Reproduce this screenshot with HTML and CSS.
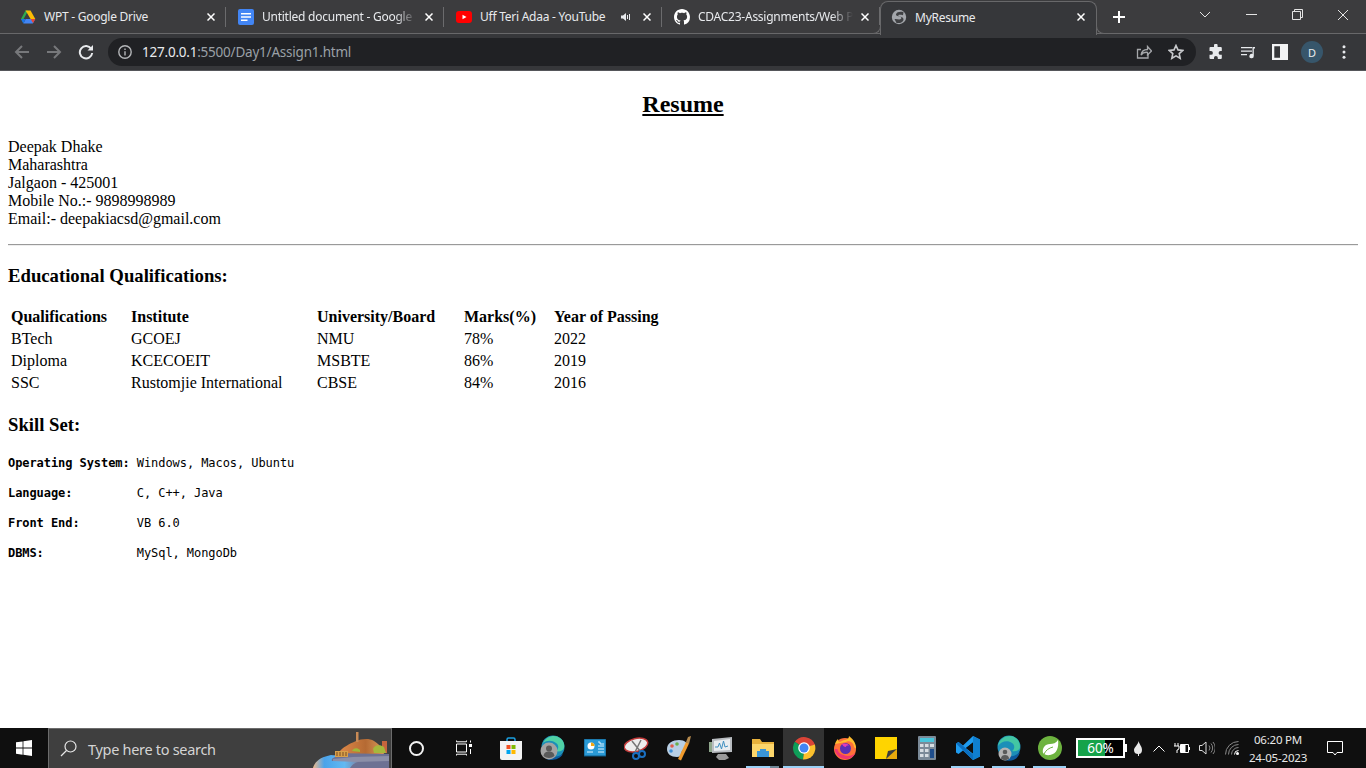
FILE: index.html
```html
<!DOCTYPE html>
<html lang="en">
<head>
  <meta charset="UTF-8">
  <title>MyResume</title>
  <link rel="stylesheet" href="styles.css">
</head>
<body>

  <div class="tabstrip">
    <div class="tab first">
      <svg class="favicon" viewBox="0 0 16 16"><polygon points="5.500,1.500 8.300,1.500 3.600,10 3.500,14.300 1,10" fill="#2da94f"/><polygon points="5.500,1.500 10.500,1.500 15.300,10 10.600,10" fill="#fbbc04"/><polygon points="3.300,14.500 5.700,10 15.300,10 12.800,14.500" fill="#4285f4"/><polygon points="10.600,10 15.300,10 12.800,14.500 13,14" fill="#ea4335"/><polygon points="1,10 5.700,10 3.300,14.500" fill="#1a73e8"/></svg>
      <span class="tab-title">WPT - Google Drive</span>
      <svg class="tab-close" viewBox="0 0 8 8"><path d="M.5.5l7 7M7.500.5l-7 7"/></svg>
    </div>
    <div class="tab">
      <svg class="favicon" viewBox="0 0 16 16"><rect width="16" height="16" rx="2" fill="#4285f4"/><path d="M3 4h10v1.600H3zM3 7.200h10v1.600H3zM3 10.400h6.500V12H3z" fill="#fff"/></svg>
      <span class="tab-title fade">Untitled document - Google</span>
      <svg class="tab-close" viewBox="0 0 8 8"><path d="M.5.5l7 7M7.500.5l-7 7"/></svg>
    </div>
    <div class="tab">
      <svg class="favicon" viewBox="0 0 16 16"><rect y="2" width="16" height="12" rx="3" fill="#f00"/><polygon points="6.500,5.800 10.500,8 6.500,10.200" fill="#fff"/></svg>
      <span class="tab-title">Uff Teri Adaa - YouTube</span>
      <svg class="tab-audio" viewBox="0 0 10 10"><path d="M0 3.500h2L5 1v8L2 6.500H0z" fill="#e8eaed"/><path d="M6.500 3v4M8.500 2v6" stroke="#e8eaed" fill="none"/></svg>
      <svg class="tab-close" viewBox="0 0 8 8"><path d="M.5.5l7 7M7.500.5l-7 7"/></svg>
    </div>
    <div class="tab">
      <svg class="favicon" viewBox="0 0 16 16"><path fill="#fff" d="M8 0C3.58 0 0 3.58 0 8c0 3.54 2.29 6.53 5.47 7.59.4.07.55-.17.55-.38 0-.19-.01-.82-.01-1.49-2.01.37-2.53-.49-2.69-.94-.09-.23-.48-.94-.82-1.13-.28-.15-.68-.52-.01-.53.63-.01 1.08.58 1.23.82.72 1.21 1.87.87 2.33.66.07-.52.28-.87.51-1.07-1.78-.2-3.64-.89-3.64-3.95 0-.87.31-1.59.82-2.15-.08-.2-.36-1.02.08-2.12 0 0 .67-.21 2.2.82.64-.18 1.32-.27 2-.27.68 0 1.36.09 2 .27 1.53-1.04 2.2-.82 2.2-.82.44 1.1.16 1.92.08 2.12.51.56.82 1.27.82 2.15 0 3.07-1.87 3.75-3.65 3.95.29.25.54.73.54 1.48 0 1.07-.01 1.93-.01 2.2 0 .21.15.46.55.38A8.013 8.013 0 0016 8c0-4.42-3.58-8-8-8z"/></svg>
      <span class="tab-title fade">CDAC23-Assignments/Web P</span>
      <svg class="tab-close" viewBox="0 0 8 8"><path d="M.5.5l7 7M7.500.5l-7 7"/></svg>
    </div>
    <div class="tab active">
      <svg class="favicon" viewBox="0 0 16 16"><circle cx="8" cy="8" r="7.200" fill="#a3a6ab"/><path d="M12.500 3.200C9.500 2.300 5.500 3 5 5.300c-.4 2 3.500 1.800 5 3 1 .9-.2 2.200-1.800 2.200-1.500 0-3-.7-4.700-.4l2 3.800c3 .7 6.500-.5 7-3 .4-2-1.800-3-3.500-3.400-1-.2-2-.6-1.600-1.300.5-.7 2.400-.5 4.600 0z" fill="#3f4043"/></svg>
      <span class="tab-title">MyResume</span>
      <svg class="tab-close" viewBox="0 0 8 8"><path d="M.5.5l7 7M7.500.5l-7 7"/></svg>
    </div>
    <svg class="new-tab" viewBox="0 0 12 12"><path d="M6 0v12M0 6h12"/></svg>
    <div class="window-btns">
      <div class="window-btn"><svg width="12" height="7" viewBox="0 0 12 7"><path d="M1 1l5 5 5-5"/></svg></div>
      <div class="window-btn"><svg width="11" height="1" viewBox="0 0 11 1"><path d="M0 .5h11"/></svg></div>
      <div class="window-btn"><svg width="11" height="11" viewBox="0 0 11 11"><path d="M.5 2.500h8v8h-8zM2.500 2.500v-2h8v8h-2"/></svg></div>
      <div class="window-btn"><svg width="12" height="12" viewBox="0 0 12 12"><path d="M1 1l10 10M11 1L1 11"/></svg></div>
    </div>
  </div>

  <div class="toolbar">
    <div class="tool-btn"><svg viewBox="0 0 16 16" class="dim"><path d="M15 8H2M8 2L2 8l6 6"/></svg></div>
    <div class="tool-btn"><svg viewBox="0 0 16 16" class="dim"><path d="M1 8h13M8 2l6 6-6 6"/></svg></div>
    <div class="tool-btn"><svg viewBox="0 0 16 16" class="bright"><path d="M13.200 4.800A6.200 6.200 0 1 0 14.200 9"/><path d="M15 1v5.500H9.500z" class="solid"/></svg></div>
    <div class="omnibox">
      <svg class="info" viewBox="0 0 16 16"><circle cx="8" cy="8" r="6.200"/><path d="M8 7.200v4.300M8 4.400v1.600"/></svg>
      <span class="url"><span class="host">127.0.0.1</span>:5500/Day1/Assign1.html</span>
      <div class="tool-btn"><svg viewBox="0 0 16 16" class="dim-light"><path d="M12 9.500V14H1.500V5.500H5"/><path d="M5 11c.5-3.500 3-5.500 6.500-5.500V2.500l4 4.500-4 4V8.300C8.500 8 6.500 9 5 11z"/></svg></div>
      <div class="tool-btn"><svg viewBox="0 0 16 16" class="dim-light star"><path d="M8 1.500l2 4.400 4.800.5-3.600 3.200 1 4.700L8 11.900l-4.200 2.400 1-4.700L1.200 6.400 6 5.900z"/></svg></div>
    </div>
    <div class="tool-btn ext"><svg viewBox="0 0 16 16"><path fill="#e8eaed" d="M6 1.500a1.800 1.800 0 0 1 3.600 0V3h3.200a1 1 0 0 1 1 1v3h-1.300a1.900 1.900 0 0 0 0 3.800h1.300V14a1 1 0 0 1-1 1h-3v-1.200a1.900 1.900 0 0 0-3.800 0V15H2.500a1 1 0 0 1-1-1v-3.200H3a1.900 1.900 0 0 0 0-3.800H1.500V4a1 1 0 0 1 1-1H6z"/></svg></div>
    <div class="tool-btn"><svg viewBox="0 0 16 16"><path d="M1 3h11v1.300H1zM1 6.500h11v1.300H1zM1 10h6v1.300H1z" fill="#e8eaed"/><path d="M12.500 3H15v1.500h-1.200V12a2.200 2.200 0 1 1-1.300-2z" fill="#e8eaed"/></svg></div>
    <div class="tool-btn"><svg viewBox="0 0 14 14"><path fill-rule="evenodd" d="M0 0h14v14H0zM2 2v10h5V2z" fill="#f2f3f4"/></svg></div>
    <div class="tool-btn"><span class="avatar">D</span></div>
    <div class="tool-btn"><svg viewBox="0 0 16 16"><circle cx="8" cy="2.800" r="1.500" fill="#e8eaed"/><circle cx="8" cy="8" r="1.500" fill="#e8eaed"/><circle cx="8" cy="13.200" r="1.500" fill="#e8eaed"/></svg></div>
  </div>

  <div class="page">
    <h2 class="title">Resume</h2>
    <p class="contact">
      Deepak Dhake<br>
      Maharashtra<br>
      Jalgaon - 425001<br>
      Mobile No.:- 9898998989<br>
      Email:- deepakiacsd@gmail.com
    </p>
    <hr class="rule">
    <h3>Educational Qualifications:</h3>
    <table>
      <colgroup>
        <col class="col-qual"><col class="col-inst"><col class="col-univ"><col class="col-marks"><col class="col-year">
      </colgroup>
      <tr><th>Qualifications</th><th>Institute</th><th>University/Board</th><th>Marks(%)</th><th>Year of Passing</th></tr>
      <tr><td>BTech</td><td>GCOEJ</td><td>NMU</td><td>78%</td><td>2022</td></tr>
      <tr><td>Diploma</td><td>KCECOEIT</td><td>MSBTE</td><td>86%</td><td>2019</td></tr>
      <tr><td>SSC</td><td>Rustomjie International</td><td>CBSE</td><td>84%</td><td>2016</td></tr>
    </table>
    <h3>Skill Set:</h3>
    <pre><b>Operating System:</b> Windows, Macos, Ubuntu</pre>
    <pre><b>Language:</b>         C, C++, Java</pre>
    <pre><b>Front End:</b>        VB 6.0</pre>
    <pre><b>DBMS:</b>             MySql, MongoDb</pre>
  </div>

  <div class="taskbar">
    <div class="start">
      <svg width="16" height="16" viewBox="0 0 16 16"><path fill="#fff" d="M0 2.300l6.600-.9v6.200H0zM7.400 1.300L16 0v7.600H7.400zM0 8.400h6.600v6.300L0 13.700zM7.400 8.400H16V16l-8.600-1.200z"/></svg>
    </div>
    <div class="search">
      <svg class="search-icon" width="17" height="17" viewBox="0 0 17 17"><circle cx="10.500" cy="6.500" r="5.500"/><path d="M6.500 10.500L1 16"/></svg>
      <span class="search-text">Type here to search</span>
      <svg class="search-art" width="80" height="39" viewBox="0 0 80 39">
        <defs>
          <linearGradient id="water" x1="0" y1="0" x2="1" y2="0"><stop offset="0" stop-color="#f0b98a"/><stop offset=".25" stop-color="#4aa3ea"/><stop offset=".7" stop-color="#62b9f2"/><stop offset="1" stop-color="#7c86a8"/></linearGradient>
          <linearGradient id="dome" x1="0" y1="0" x2="1" y2="0"><stop offset="0" stop-color="#e08a4a"/><stop offset=".6" stop-color="#b56a33"/><stop offset="1" stop-color="#d99a5c"/></linearGradient>
        </defs>
        <path d="M18 39V28l14-4h30l16 1v14z" fill="#6d7193"/>
        <path d="M22 30l20-2 36-1v5l-34 1-22 1z" fill="#8c8fa8"/>
        <path d="M2 39c2-7 8-11 18-13l8 1c-6 1-8 3-7 5l26 1c-4 1-6 3-8 6z" fill="url(#water)"/>
        <path d="M27 24c5-6 11-9 18-12 5-2 13-3 18 0 5 3 8 7 10 13z" fill="url(#dome)"/>
        <rect x="45" y="3" width="2.500" height="10" fill="#c98a55"/>
        <rect x="71" y="12" width="5" height="12" fill="#c8653d"/>
        <path d="M41 22c1-3 5-4 8-1v2z" fill="#9fb83a"/>
        <path d="M62 20c1-4 7-5 11-2l2 6H63z" fill="#a6b83c"/>
        <path d="M24 22h13v6H24z" fill="#d8a04a"/>
        <path d="M26 23v4M29 23v4M32 23v4M35 23v4" stroke="#7a4a20"/>
      </svg>
    </div>
    <div class="task-btn cortana"><span class="cortana-ring"></span></div>
    <div class="task-btn taskview">
      <svg width="16" height="16" viewBox="0 0 16 16"><path d="M.5.500v1.300h10V.500M.5 15.500v-1.300h10v1.300M.5 4h10v8H.5z" fill="none" stroke="#fff"/><rect x="13" y="4" width="3" height="3" fill="#fff"/><path d="M14.500.500v2M14.500 9v5" stroke="#fff"/></svg>
    </div>

    <div class="apps wide">
      <div class="task-btn"><svg width="24" height="24" viewBox="0 0 24 24"><path d="M8 6V3.500A1.500 1.500 0 0 1 9.500 2h5A1.500 1.500 0 0 1 16 3.500V6" fill="none" stroke="#1ba1e2" stroke-width="1.500"/><path d="M1 5h22v17a2 2 0 0 1-2 2H3a2 2 0 0 1-2-2z" fill="#f3f3f3"/><rect x="7.500" y="9" width="4" height="4" fill="#f25022"/><rect x="12.500" y="9" width="4" height="4" fill="#7fba00"/><rect x="7.500" y="14" width="4" height="4" fill="#00a4ef"/><rect x="12.500" y="14" width="4" height="4" fill="#ffb900"/></svg></div>
      <div class="task-btn"><svg width="26" height="26" viewBox="0 0 26 26"><circle cx="13" cy="12" r="11.500" fill="#1c8fb8"/><path d="M3 8c3-7 12-9 17-5 3 2 5 6 4 10-1 3-5 4-8 3 3-2 3-6 0-8-4-3-9-3-13 0z" fill="#4fd1a5"/><path d="M6 24c6 2 13 1 17-5-3 2-7 3-11 3z" fill="#0d5a9e"/><circle cx="9" cy="16" r="8.500" fill="#a3a3a3"/><circle cx="9" cy="13.500" r="3" fill="#5a5a5a"/><path d="M3.500 21c.6-3.600 2.600-4.500 5.500-4.500s4.900.9 5.500 4.500a8.500 8.500 0 0 1-11 0z" fill="#5a5a5a"/></svg></div>
      <div class="task-btn"><svg width="22" height="18" viewBox="0 0 22 18"><rect width="22" height="17" fill="#2a9ad6" stroke="#0f5a86"/><circle cx="7" cy="7" r="3.500" fill="#fff"/><path d="M7 7V3.500A3.500 3.500 0 0 1 10.500 7z" fill="#f3a712"/><path d="M14 3h2v2h4M14 7h6M14 10h6M3 13h6M14 13h6" stroke="#dff3ff" fill="none"/></svg></div>
      <div class="task-btn"><svg width="26" height="24" viewBox="0 0 26 24"><ellipse cx="12" cy="9" rx="12" ry="6.500" fill="#ededed" stroke="#c23b3b" stroke-width="1.500" transform="rotate(-14 12 9)"/><path d="M8 5l8 10M17 4l-6 12" stroke="#777" stroke-width="1.500"/><circle cx="18" cy="18" r="3" fill="none" stroke="#1a6fc0" stroke-width="2"/><circle cx="12" cy="20" r="3" fill="none" stroke="#1a6fc0" stroke-width="2"/></svg></div>
      <div class="task-btn"><svg width="26" height="26" viewBox="0 0 26 26"><path d="M1 14C1 8 7 5 13 5c6 0 9 3 8 7-1 3-4 2-5 4-1 3 0 6-5 6-6 0-10-3-10-8z" fill="#b8cfe4"/><circle cx="6" cy="11" r="1.800" fill="#e25b4a"/><circle cx="11" cy="9" r="1.800" fill="#6ab04c"/><circle cx="5" cy="16" r="1.800" fill="#3f8fd6"/><path d="M12 24l8-17 3 1.500-8 17z" fill="#ef9a2d"/><path d="M20 7l2-5 3-1-1 4-1 4z" fill="#b58a4e"/></svg></div>
      <div class="task-btn"><svg width="24" height="24" viewBox="0 0 24 24"><path d="M3 3l20-2v15L3 17z" fill="#b9bdc1"/><path d="M5 5l16-2v11L5 15z" fill="#e9edf0"/><path d="M6 11l3 0 1.500-4 2 6 2-8 1.500 6 3-1" fill="none" stroke="#3f8fc0"/><path d="M9 18h8l3 4-4 2h-6l-3-3z" fill="#9a9a9a"/><rect y="6" width="3" height="10" fill="#8fa78c"/></svg></div>
    </div>
    <div class="apps narrow">
      <div class="task-btn running split"><svg width="24" height="20" viewBox="0 0 24 20"><path d="M1 1h8l2 3h12v15H1z" fill="#e8b23c"/><path d="M1 6h22v13H1z" fill="#fcd66b"/><path d="M9 11h6v2h3v6H6v-6h3z" fill="#3a95d6"/></svg></div>
      <div class="task-btn running current"><svg width="24" height="24" viewBox="0 0 24 24"><path d="M12 12L2.800 5.800A11.500 11.500 0 0 1 23 9z" fill="#db4437"/><path d="M12 12l10.800-3.500A11.500 11.500 0 0 1 11 23.500z" fill="#fbc02d"/><path d="M12 12l-1 11.500A11.500 11.500 0 0 1 2.800 5.800z" fill="#0f9d58"/><circle cx="12" cy="12" r="5.800" fill="#fff"/><circle cx="12" cy="12" r="4.500" fill="#4285f4"/></svg></div>
      <div class="task-btn"><svg width="24" height="24" viewBox="0 0 24 24"><circle cx="12" cy="13" r="11" fill="#ff7139"/><path d="M2 8c1-3 2-4 3-5 0 2 1 3 2 3 2-1 3-2 5-2 3-1 4-2 4-4 4 3 7 7 7 12 0 1-1 0-2-1 0-5-6-7-8-5z" fill="#ffbd2e"/><circle cx="12.500" cy="12.500" r="5.500" fill="#5b2fb5"/><path d="M9 8c2-1 6-1 7 2-2-1-3 0-3 1-2 0-3-1-4-3z" fill="#e63db4"/><path d="M1.500 13c1 6 6 10 11 10 4 0 8-2 10-6-3 3-8 4-12 2-4-1-6-4-6-6z" fill="#f0346f"/></svg></div>
      <div class="task-btn"><svg width="22" height="22" viewBox="0 0 22 22"><path d="M0 0h22v14l-8 8H0z" fill="#ffd400"/><path d="M22 12v10H11z" fill="#e8a90c"/><path d="M22 12L11 22l2-8z" fill="#3d3d3d"/></svg></div>
      <div class="task-btn"><svg width="18" height="24" viewBox="0 0 18 24"><rect width="18" height="24" rx="1" fill="#7b8a98"/><rect x="2" y="2" width="14" height="4" fill="#49c5dc"/><path d="M2 8h3.500v3H2zM7 8h3.500v3H7zM12 8h4v3h-4zM2 13h3.500v3H2zM7 13h3.500v3H7zM2 18h3.500v3H2zM7 18h3.500v3H7z" fill="#d7dde2"/><rect x="12" y="13" width="4" height="9" fill="#1f4e8c"/></svg></div>
      <div class="task-btn running"><svg width="24" height="24" viewBox="0 0 24 24"><path d="M17 0l7 3.500v17L17 24 7 14.500 2.500 18 0 16.500V7.500L2.500 6 7 9.500zM17 6.500L10 12l7 5.500z" fill="#1f9cf0" fill-rule="evenodd"/><path d="M17 0l7 3.500v17L17 24z" fill="#0f7fd0"/><path d="M17 6.500L10 12l7 5.500z" fill="#0f0f0f"/><path d="M0 7.500L2.500 6l14.500 12.500V24z" fill="#0a6fc0"/></svg></div>
      <div class="task-btn running"><svg width="26" height="26" viewBox="0 0 26 26"><circle cx="13" cy="12" r="11.500" fill="#1c8fb8"/><path d="M2 11C3 4 9 1 14 1c6 0 10 5 10 11 0 3-4 5-8 4 3-2 3-6 0-8-4-3-11-2-14 3z" fill="#43c6a3"/><path d="M8 25c7 2 14 0 16-8-3 3-8 5-13 4z" fill="#0d5a9e"/><circle cx="9" cy="19" r="6.500" fill="#b3b3b3"/><circle cx="9" cy="17" r="2.300" fill="#5a5a5a"/><path d="M4.800 23.500c.5-2.500 2-3.500 4.200-3.500s3.700 1 4.200 3.500a6.500 6.500 0 0 1-8.400 0z" fill="#5a5a5a"/></svg></div>
      <div class="task-btn running"><svg width="24" height="24" viewBox="0 0 24 24"><circle cx="12" cy="12" r="12" fill="#6db33f"/><path d="M20 4c1 7-1 14-8 15-3 .5-6-.5-7-2-1-5 2-9 7-9 3 0 6-1 8-4z" fill="#fff"/><path d="M6 18c2-4 5-6 9-7" stroke="#6db33f" fill="none"/></svg></div>
    </div>

    <div class="tray">
      <div class="battery"><span class="battery-level"></span><span class="battery-text">60%</span></div>
      <span class="battery-nub"></span>
      <div class="tray-icon flame"><svg width="8" height="15" viewBox="0 0 8 15"><path d="M4.500 0C5 3 8 5 8 9c0 3-2 4-3 4v2H4v-2C2 13 0 12 0 9c0-3 4-5 4.500-9z" fill="#e8e8e8"/></svg></div>
      <div class="tray-icon chev"><svg width="12" height="7" viewBox="0 0 12 7"><path d="M.5 6.500L6 1l5.500 5.500" fill="none" stroke="#fff"/></svg></div>
      <div class="tray-icon plug"><svg width="16" height="11" viewBox="0 0 16 11"><path d="M1 0v3M4 0v3M0 3h5v2a2 2 0 0 1-2 2v3" fill="none" stroke="#fff"/><path d="M6.500 1.500h8v8h-8z" fill="none" stroke="#fff"/><rect x="6.500" y="2" width="5" height="7" fill="#fff"/><rect x="15" y="4" width="1" height="3" fill="#fff"/></svg></div>
      <div class="tray-icon speaker"><svg width="16" height="14" viewBox="0 0 16 14"><path d="M.5 4.500H3L7 1v12L3 9.500H.5z" fill="none" stroke="#ddd"/><path d="M10 4.500a4 4 0 0 1 0 5M12 2.500a7 7 0 0 1 0 9M14 1a9 9 0 0 1 0 12" fill="none" stroke="#888"/></svg></div>
      <div class="tray-icon wifi"><svg width="14" height="14" viewBox="0 0 14 14"><path d="M.5 13.500a13 13 0 0 1 13-13M3.500 13.500a10 10 0 0 1 10-10M6.500 13.500a7 7 0 0 1 7-7" fill="none" stroke="#8a8a8a"/><path d="M9.500 13.500a4 4 0 0 1 4-4" fill="none" stroke="#fff"/><circle cx="12.500" cy="12.500" r="1.500" fill="#fff"/></svg></div>
      <div class="clock"><span>06:20 PM</span><span>24-05-2023</span></div>
      <div class="tray-icon notify"><svg width="16" height="16" viewBox="0 0 16 16"><path d="M.5 1.500h15v11H10l-2 2.500-2-2.500H.5z" fill="none" stroke="#fff"/></svg></div>
    </div>
  </div>

</body>
</html>
```

FILE: styles.css
```css
html, body {
  margin: 0;
  height: 100%;
}
body {
  display: flex;
  flex-direction: column;
  overflow: hidden;
  background: #fff;
  font-family: "Liberation Serif", serif;
  color: #000;
}

/* browser tabs */
.tabstrip {
  display: flex;
  flex: none;
  height: 33px;
  padding-left: 8px;
  background: #3c3c3e;
  border-bottom: 1px solid #68686a;
  font-family: "Noto Sans", sans-serif;
  font-size: 12px;
  letter-spacing: -0.25px;
  color: #e8eaed;
}
.tab {
  position: relative;
  display: flex;
  align-items: center;
  box-sizing: border-box;
  width: 218px;
  padding: 0 11px 0 12px;
  gap: 8px;
}
.tab.first {
  padding-left: 12px;
}
.tab::after {
  content: "";
  position: absolute;
  right: 0;
  top: 7px;
  height: 20px;
  border-right: 1px solid #6b6b6d;
}
.favicon {
  flex: none;
  width: 16px;
  height: 16px;
}
.tab-title {
  flex: 1;
  white-space: nowrap;
}
.tab-title.fade {
  -webkit-mask-image: linear-gradient(to right, #000 86%, transparent 100%);
  mask-image: linear-gradient(to right, #000 86%, transparent 100%);
}
.tab-close {
  flex: none;
  width: 8px;
  height: 8px;
  fill: none;
  stroke: #fff;
  stroke-width: 1.5;
}
.tab-audio {
  flex: none;
  width: 10px;
  height: 10px;
  margin-right: 4px;
}
.tab.active {
  height: 34px;
  margin-top: 1px;
  padding-bottom: 3px;
  padding-left: 10px;
  width: 217px;
  background: #36373a;
  border: 1px solid #68686a;
  border-bottom: 0;
  border-radius: 8px 8px 0 0;
  z-index: 1;
}
.tab.active::after {
  top: auto;
  right: -9px;
  bottom: 1px;
  width: 8px;
  height: 8px;
  border: 0;
  border-left: 1px solid #68686a;
  border-bottom: 1px solid #68686a;
  border-bottom-left-radius: 8px;
  background: #3c3c3e;
}
.tab.active::before {
  content: "";
  position: absolute;
  left: -9px;
  bottom: 1px;
  width: 8px;
  height: 8px;
  border-right: 1px solid #68686a;
  border-bottom: 1px solid #68686a;
  border-bottom-right-radius: 8px;
  background: #3c3c3e;
}
.new-tab {
  flex: none;
  width: 12px;
  height: 12px;
  margin: 11px 0 0 16px;
  fill: none;
  stroke: #fff;
  stroke-width: 2;
}
.window-btns {
  display: flex;
  margin-left: auto;
}
.window-btn {
  display: flex;
  align-items: center;
  justify-content: center;
  width: 46px;
  height: 29px;
}
.window-btn svg {
  fill: none;
  stroke: #e4e4e4;
}

/* address bar */
.toolbar {
  display: flex;
  flex: none;
  align-items: center;
  height: 36px;
  padding: 0 6px;
  background: #36373a;
  border-bottom: 1px solid #55565a;
}
.tool-btn {
  display: flex;
  flex: none;
  align-items: center;
  justify-content: center;
  width: 32px;
  height: 28px;
}
.tool-btn svg {
  width: 16px;
  height: 16px;
  fill: none;
}
.tool-btn .dim {
  stroke: #77787b;
  stroke-width: 2;
}
.tool-btn .bright {
  stroke: #e8eaed;
  stroke-width: 2;
}
.tool-btn .solid {
  fill: #e8eaed;
  stroke: none;
}
.tool-btn .dim-light {
  stroke: #a5a7aa;
  stroke-width: 1.3;
}
.tool-btn .star {
  stroke: #c8cacd;
  stroke-width: 1.6;
}
.omnibox {
  display: flex;
  flex: 1;
  align-items: center;
  height: 28px;
  margin-left: 6px;
  padding: 0 4px 0 9px;
  background: #202124;
  border-radius: 14px;
}
.info {
  flex: none;
  width: 16px;
  height: 16px;
  fill: none;
  stroke: #b4b6b9;
  stroke-width: 1.4;
}
.url {
  flex: 1;
  margin-left: 9px;
  font-family: "Noto Sans", sans-serif;
  font-size: 13.5px;
  letter-spacing: -0.22px;
  color: #9aa0a6;
}
.host {
  color: #e8eaed;
}
.ext {
  margin-left: 4px;
}
.avatar {
  display: flex;
  align-items: center;
  justify-content: center;
  width: 22px;
  height: 22px;
  border-radius: 50%;
  background: #37566b;
  font-family: "Noto Sans", sans-serif;
  font-size: 11px;
  color: #e8eaed;
}

/* document */
.page {
  flex: 1;
  padding: 0 8px;
  overflow: hidden;
}
.title {
  margin: 20px 0 19.92px;
  font-size: 24px;
  text-align: center;
  text-decoration: underline;
}
.contact {
  margin: 0;
  font-size: 16px;
  line-height: 18px;
}
.rule {
  margin: 16px 0 0;
  border: 0;
  border-top: 1px solid #9a9a9a;
  border-bottom: 1px solid #eee;
}
h3 {
  margin: 18.72px 0;
  font-size: 18.72px;
}
table {
  table-layout: fixed;
  width: 646px;
  border-spacing: 2px;
  font-size: 16px;
  line-height: 18px;
}
th, td {
  padding: 1px;
  text-align: left;
  white-space: nowrap;
}
.col-qual { width: 118px; }
.col-inst { width: 184px; }
.col-univ { width: 145px; }
.col-marks { width: 88px; }
.col-year { width: 107px; }
pre {
  margin: 13px 0;
  font-family: "DejaVu Sans Mono", monospace;
  font-size: 12px;
  line-height: 17px;
  letter-spacing: -0.07px;
}

/* windows taskbar */
.taskbar {
  display: flex;
  flex: none;
  align-items: stretch;
  height: 40px;
  background: #0f0f0f;
}
.start {
  display: flex;
  flex: none;
  align-items: center;
  justify-content: center;
  width: 48px;
}
.search {
  position: relative;
  display: flex;
  flex: none;
  align-items: center;
  box-sizing: border-box;
  width: 344px;
  padding-left: 11px;
  background: #3f3f3f;
  border: 1px solid #6c6c6c;
  border-bottom: 0;
  overflow: hidden;
}
.search-icon {
  flex: none;
  fill: none;
  stroke: #e6e6e6;
  stroke-width: 1.2;
}
.search-text {
  margin-left: 11px;
  font-family: "Noto Sans", sans-serif;
  font-size: 14.5px;
  letter-spacing: -0.3px;
  color: #d4d4d4;
}
.search-art {
  position: absolute;
  right: 0;
  bottom: 0;
}
.task-btn {
  position: relative;
  display: flex;
  flex: none;
  align-items: center;
  justify-content: center;
  box-sizing: border-box;
}
.cortana {
  width: 48px;
}
.cortana-ring {
  width: 11px;
  height: 11px;
  border: 2px solid #f2f2f2;
  border-radius: 50%;
}
.taskview {
  width: 47px;
}
.apps {
  display: flex;
  flex: none;
}
.apps.wide {
  margin-left: 3px;
}
.apps.wide .task-btn {
  width: 42px;
}
.apps.narrow .task-btn {
  width: 41px;
}
.running::after {
  content: "";
  position: absolute;
  left: 4px;
  right: 4px;
  bottom: 0;
  height: 2px;
  background: #9ad0f5;
}
.current {
  background: #333;
}
.current::after {
  left: 0;
  right: 0;
}
.split::after {
  background: linear-gradient(to right, #9ad0f5 72%, #6f8796 72%);
}

/* tray */
.tray {
  display: flex;
  flex: none;
  align-items: center;
  margin-left: 6px;
  color: #e8e8e8;
}
.battery {
  position: relative;
  box-sizing: border-box;
  width: 49px;
  height: 20px;
  background: #000;
  border: 2px solid #fff;
}
.battery-level {
  display: block;
  width: 60%;
  height: 100%;
  background: #16a34a;
}
.battery-text {
  position: absolute;
  inset: 0;
  text-align: center;
  font-family: "Noto Sans", sans-serif;
  font-size: 13.5px;
  line-height: 16px;
  color: #fff;
}
.battery-nub {
  flex: none;
  width: 2px;
  height: 8px;
  background: #fff;
}
.tray-icon {
  display: flex;
  flex: none;
  align-items: center;
  justify-content: center;
}
.flame { width: 21px; }
.chev { width: 22px; }
.plug { width: 24px; }
.speaker { width: 26px; }
.wifi { width: 24px; }
.notify { width: 54px; }
.clock {
  display: flex;
  flex: none;
  flex-direction: column;
  align-items: center;
  gap: 3px;
  width: 60px;
  margin-left: 4px;
  font-family: "Noto Sans", sans-serif;
  font-size: 11.5px;
  letter-spacing: -0.2px;
  line-height: 15px;
  white-space: nowrap;
}
```
